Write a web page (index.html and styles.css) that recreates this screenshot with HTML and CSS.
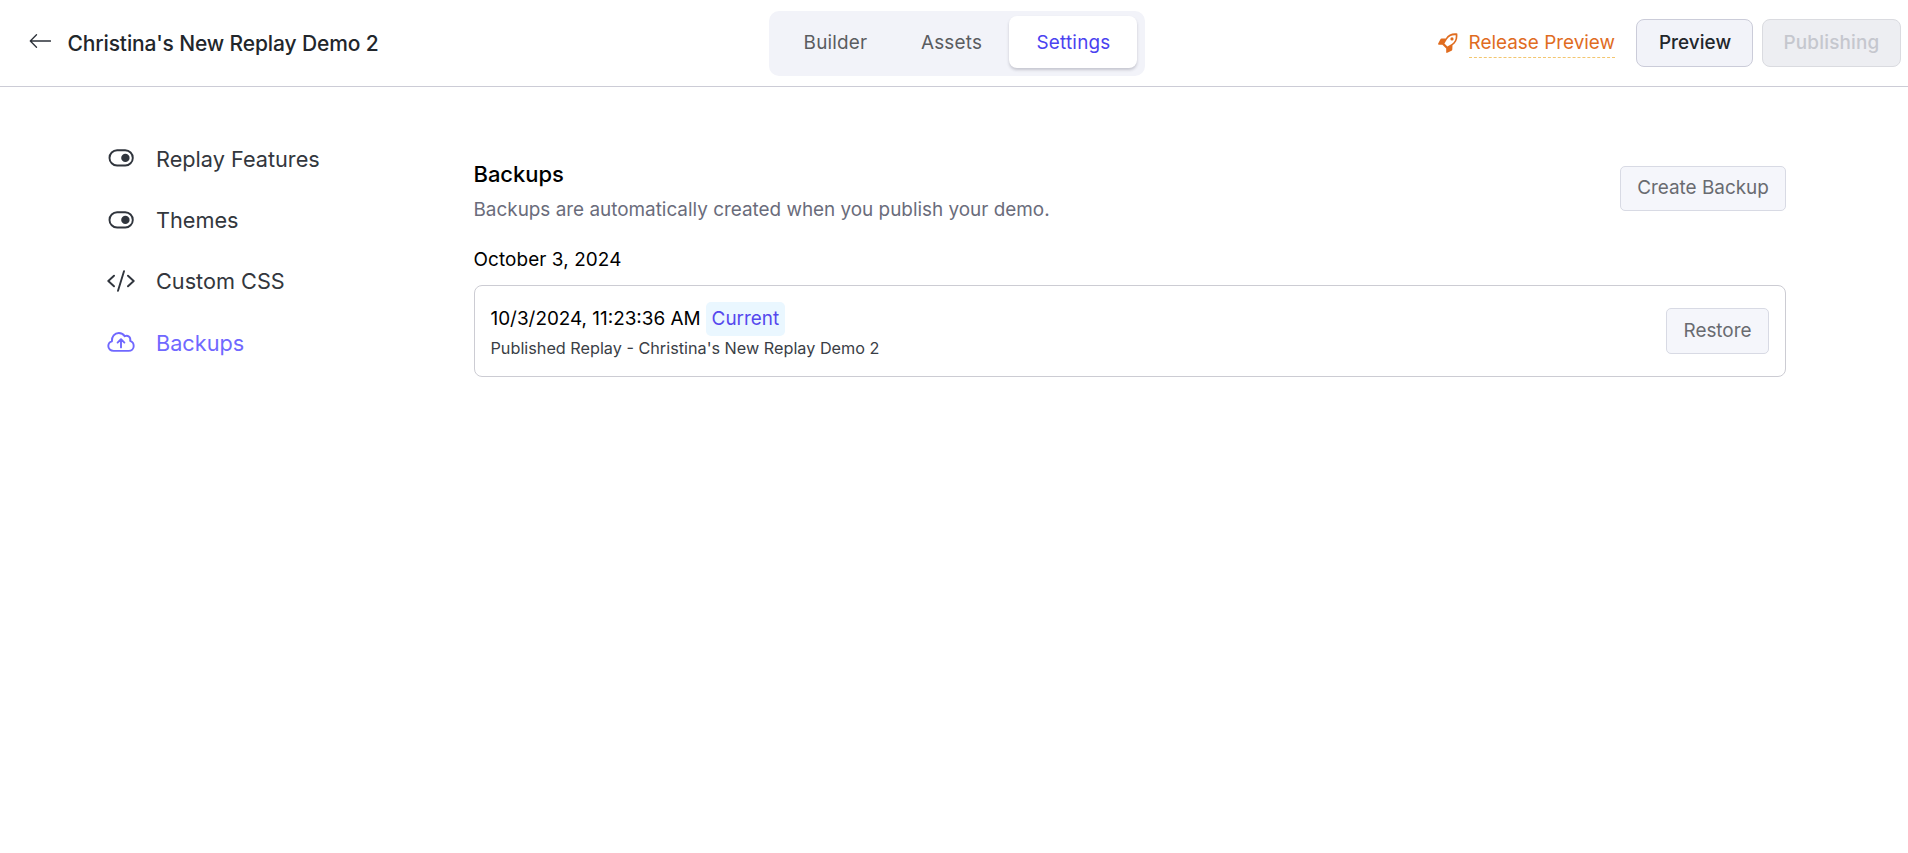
FILE: index.html
```html
<!DOCTYPE html>
<html lang="en">
<head>
<meta charset="utf-8">
<title>Christina's New Replay Demo 2</title>
<link rel="stylesheet" href="styles.css">
</head>
<body>
<header class="topbar">
  <div class="topbar-left">
    <svg class="back" width="22" height="14" viewBox="0 0 22 14" fill="none" stroke="#2b3038" stroke-width="1.3" stroke-linecap="round" stroke-linejoin="round"><path d="M21.500 7H1.300M7.500 .8 1.300 7 7.500 13.200"/></svg>
    <h1 class="title">Christina's New Replay Demo 2</h1>
  </div>
  <nav class="tabs">
    <a class="tab">Builder</a>
    <a class="tab">Assets</a>
    <a class="tab active">Settings</a>
  </nav>
  <div class="actions">
    <a class="release">
      <svg width="20" height="20" viewBox="0 0 20 20"><path fill="#e06c1f" fill-rule="evenodd" d="M19.300.5C14.200-.2 10.300 1.500 7.700 5.400L3.600 5.600c-.6 0-1 .3-1.300.8L.2 10.600c-.3.600 0 1.100.6 1.100h3.600L8.200 15.600v3.600c0 .6.5.9 1.100.6l4.200-2.100c.5-.3.800-.7.800-1.300l.2-4.100C18.400 9.700 20 5.700 19.300.5ZM17.700 2.200C18 6.300 16.700 9 13.700 11.100L9.400 13.600 6.400 10.600 9 6.300C11.100 3.200 13.700 1.900 17.700 2.200Z"/><circle cx="14" cy="5.900" r="1.600" fill="#e06c1f"/></svg>
      <span class="release-text">Release Preview</span>
    </a>
    <button class="btn preview">Preview</button>
    <button class="btn publishing">Publishing</button>
  </div>
</header>
<div class="page">
  <aside class="side">
    <a class="side-item"><svg class="raised" width="28" height="22" viewBox="0 0 28 22"><rect x="2.500" y="3.300" width="23.300" height="15.200" rx="7.600" fill="none" stroke="#30353d" stroke-width="1.900"/><circle cx="18.400" cy="10.900" r="4.200" fill="#30353d"/></svg>Replay Features</a>
    <a class="side-item"><svg width="28" height="22" viewBox="0 0 28 22"><rect x="2.500" y="3.300" width="23.300" height="15.200" rx="7.600" fill="none" stroke="#30353d" stroke-width="1.900"/><circle cx="18.400" cy="10.900" r="4.200" fill="#30353d"/></svg>Themes</a>
    <a class="side-item"><svg width="28" height="22" viewBox="0 0 28 22" fill="none" stroke="#30353d" stroke-width="1.900" stroke-linecap="round" stroke-linejoin="round"><path d="M7 5.700 1.300 11 7 16.300M21 5.700 26.700 11 21 16.300M17 1.200 11 20.800"/></svg>Custom CSS</a>
    <a class="side-item current"><svg class="raised" width="28" height="22" viewBox="0 0 28 22" fill="none" stroke="#7068ff" stroke-width="1.900" stroke-linecap="round" stroke-linejoin="round"><path d="M6.600 19.900C3.500 19.900 1.300 17.800 1.300 15.100 1.300 12.700 2.700 10.900 4.900 10.300 4.500 5.500 7.700 2 11.800 2 14.400 2 16.500 3.200 17.700 5.200 20.700 3.600 24 6.100 23.200 9.900 25.400 10.700 26.700 12.500 26.700 14.900 26.700 17.800 24.500 19.900 21.600 19.900Z"/><path d="M14 16.400V8.400M10.600 11.600 14 8.200 17.400 11.600"/></svg>Backups</a>
  </aside>
  <main class="main">
    <div class="section-head">
      <div>
        <h2 class="heading">Backups</h2>
        <p class="desc">Backups are automatically created when you publish your demo.</p>
      </div>
      <button class="btn soft create">Create Backup</button>
    </div>
    <h3 class="date">October 3, 2024</h3>
    <section class="card">
      <div>
        <div class="stamp">10/3/2024, 11:23:36 AM <span class="badge">Current</span></div>
        <div class="note">Published Replay - Christina's New Replay Demo 2</div>
      </div>
      <button class="btn soft restore">Restore</button>
    </section>
  </main>
</div>
</body>
</html>
```
FILE: styles.css
```css
* { box-sizing: border-box; }
body { margin: 0; background: #fff; color: #000; font: 400 18.900px/28px Inter, sans-serif; white-space: nowrap; }
h1, h2, h3, p { margin: 0; }
svg { display: block; flex: none; }

.topbar { display: grid; grid-template-columns: 769px 376px 1fr; height: 87px; border-bottom: 1px solid #ccccd6; }
.topbar-left { display: flex; align-items: center; padding-left: 29px; }
.back { margin: 0 16.500px 5px 0; }
.title { padding-top: 2px; font-size: 21px; font-weight: 500; letter-spacing: -0.13px; color: #22262b; }

.tabs { display: flex; height: 65px; margin-top: 11px; padding: 5px 8px 8px; background: #f2f3f9; border-radius: 10px; }
.tab { display: flex; align-items: center; justify-content: center; height: 52px; width: 117px; padding: 2px 0 0 2px; letter-spacing: 0.2px; color: #5a5c60; }
.tab:first-child { width: 115px; }
.tab.active { width: 128px; padding-left: 1px; background: #fff; color: #4a42f0; border-radius: 8px; box-shadow: 0 2px 3px rgba(40, 42, 60, .22); }

.actions { display: flex; align-items: center; justify-content: flex-end; padding-right: 7px; }
.release { display: flex; align-items: center; gap: 10.500px; margin-right: 21px; color: #e06c1f; }
.release-text { height: 30px; padding-top: 1px; border-bottom: 1px dashed #f3c66f; }
.btn { display: flex; align-items: center; justify-content: center; padding: 0; font: inherit; border: 1px solid #cbccd9; background: #f2f3f9; border-radius: 8px; }
.preview { width: 117px; height: 48px; font-weight: 450; letter-spacing: 0.05px; padding-left: 1px; color: #22262b; }
.publishing { width: 139px; height: 48px; margin-left: 9px; font-weight: 450; letter-spacing: 0.2px; color: #c5c7ce; background: #edeef2; border-color: #dadbe0; }

.page { display: flex; }
.side { width: 473.500px; padding: 41px 0 0 107px; }
.side-item { display: flex; align-items: center; gap: 21px; height: 61.3px; font-size: 21.700px; color: #33373d; }
.side-item.current { color: #7068ff; }
.raised { margin-bottom: 2px; }

.main { width: 1312px; padding-top: 72px; }
.section-head { display: flex; justify-content: space-between; }
.heading { font-size: 22px; font-weight: 550; letter-spacing: -0.05px; line-height: 30px; }
.desc { margin-top: 7px; color: #6a6c7b; }
.soft { background: #f5f6fb; border-color: #d8dae4; border-radius: 5px; color: #696b70; }
.create { width: 166px; height: 45px; margin-top: 7px; padding: 0 0 2px 1px; }
.date { margin-top: 22px; font-size: 18.900px; font-weight: 400; letter-spacing: 0.1px; }
.card { display: flex; justify-content: space-between; height: 92px; margin-top: 11px; padding: 16px 16px 0; border: 1px solid #ccccd3; border-radius: 8px; }
.stamp { display: flex; align-items: center; gap: 5px; height: 34px; }
.badge { padding: 3px 6px; background: #eaf7ff; color: #5548ee; border-radius: 5px; }
.note { font-size: 16.230px; line-height: 24px; color: #3a3e46; }
.restore { width: 103px; height: 46px; margin-top: 6px; padding-left: 1px; }
```
